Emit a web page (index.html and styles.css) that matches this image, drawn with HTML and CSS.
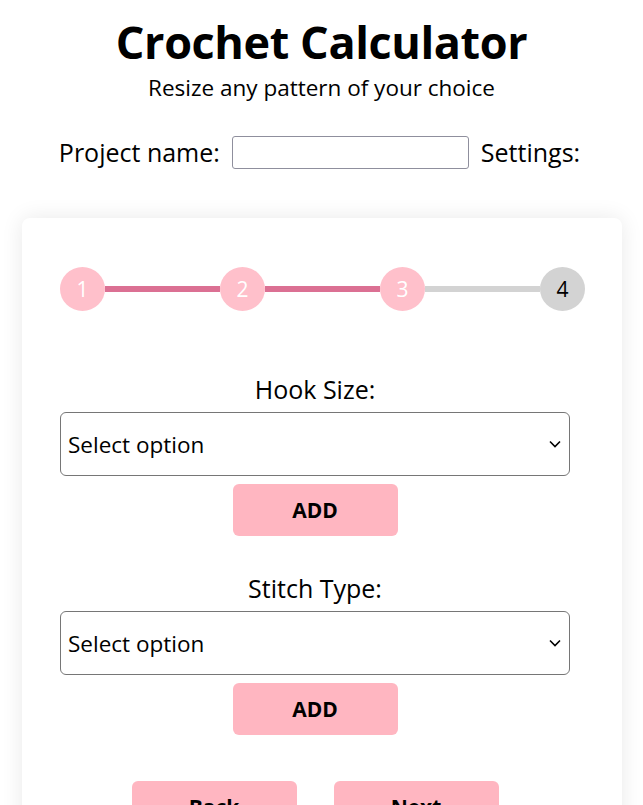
FILE: index.html
```html
<!DOCTYPE html>
<html lang="en">
<head>
<meta charset="utf-8">
<title>Crochet Calculator</title>
<link rel="stylesheet" href="styles.css">
</head>
<body>
<header class="header">
  <h1 class="title">Crochet Calculator</h1>
  <p class="subtitle">Resize any pattern of your choice</p>
  <div class="project-row">
    <label class="project-label" for="pname">Project name:</label>
    <input class="project-input" id="pname" type="text">
    <span class="project-label">Settings:</span>
  </div>
</header>
<main class="card">
  <div class="stepper">
    <div class="step done">1</div>
    <div class="bar done"></div>
    <div class="step done">2</div>
    <div class="bar done"></div>
    <div class="step done">3</div>
    <div class="bar"></div>
    <div class="step">4</div>
  </div>
  <div class="form">
    <div class="group">
      <label class="group-label" for="hook">Hook Size:</label>
      <div class="select-wrap">
        <select class="select" id="hook"><option>Select option</option></select>
        <svg class="chevron" width="12" height="8" viewBox="0 0 12 8"><path d="M1 1.5 L6 6.5 L11 1.5" fill="none" stroke="#000" stroke-width="1.6"/></svg>
      </div>
      <button class="btn add">ADD</button>
    </div>
    <div class="group">
      <label class="group-label" for="stitch">Stitch Type:</label>
      <div class="select-wrap">
        <select class="select" id="stitch"><option>Select option</option></select>
        <svg class="chevron" width="12" height="8" viewBox="0 0 12 8"><path d="M1 1.5 L6 6.5 L11 1.5" fill="none" stroke="#000" stroke-width="1.6"/></svg>
      </div>
      <button class="btn add">ADD</button>
    </div>
    <div class="nav">
      <button class="btn">Back</button>
      <button class="btn">Next</button>
    </div>
  </div>
</main>
</body>
</html>
```
FILE: styles.css
```css
* { box-sizing: border-box; }
html, body { margin: 0; padding: 0; background: #fff; }
body {
  font-family: "Open Sans", "Noto Sans", sans-serif;
  color: #000;
  overflow: hidden;
}
.header {
  display: flex;
  flex-direction: column;
  align-items: center;
  padding-top: 14px;
}
.title {
  margin: 0;
  font-size: 45px;
  font-weight: 700;
  line-height: 56px;
  letter-spacing: -0.4px;
}
.subtitle {
  margin: 3px 0 0;
  font-size: 22.5px;
  line-height: 30px;
}
.project-row {
  display: flex;
  align-items: center;
  gap: 12px;
  margin-top: 32px;
  margin-left: -4px;
}
.project-label {
  font-size: 25px;
}
.project-input {
  width: 237px;
  height: 33px;
  border: 1px solid #8f8f9d;
  border-radius: 3px;
  font-size: 18px;
}
.card {
  margin: 49px 21px 0 22px;
  background: #fff;
  border-radius: 8px;
  box-shadow: 0 0 22px rgba(0, 0, 0, 0.09);
  padding: 49px 37px 40px 38px;
  height: 700px;
}
.stepper {
  display: flex;
  align-items: center;
}
.step {
  width: 45px;
  height: 44px;
  border-radius: 50%;
  background: #d3d3d3;
  color: #000;
  display: flex;
  align-items: center;
  justify-content: center;
  font-size: 21px;
  flex: none;
}
.step.done {
  background: #ffc0cb;
  color: #fff;
}
.bar {
  flex: 1;
  height: 6px;
  background: #d3d3d3;
}
.bar.done { background: #db7093; }
.form {
  width: 510px;
  margin-top: 62px;
  display: flex;
  flex-direction: column;
}
.group {
  display: flex;
  flex-direction: column;
  align-items: center;
  margin-bottom: 36px;
}
.group-label {
  font-size: 25px;
  line-height: 32px;
  margin-bottom: 7px;
}
.select-wrap {
  position: relative;
  width: 100%;
}
.select {
  display: block;
  width: 100%;
  height: 64px;
  border: 1px solid #767676;
  border-radius: 6px;
  background: #fff;
  font-family: inherit;
  font-size: 22.5px;
  padding: 0 30px 0 7px;
  color: #000;
  appearance: none;
  -webkit-appearance: none;
}
.chevron {
  position: absolute;
  right: 9px;
  top: 28px;
  pointer-events: none;
}
.btn {
  width: 165px;
  height: 52px;
  border: none;
  border-radius: 6px;
  background: #ffb6c1;
  font-family: inherit;
  font-weight: 700;
  font-size: 21px;
  color: #000;
}
.add { margin-top: 8px; }
.nav {
  display: flex;
  justify-content: center;
  gap: 37px;
  margin-top: 10px;
}
```
